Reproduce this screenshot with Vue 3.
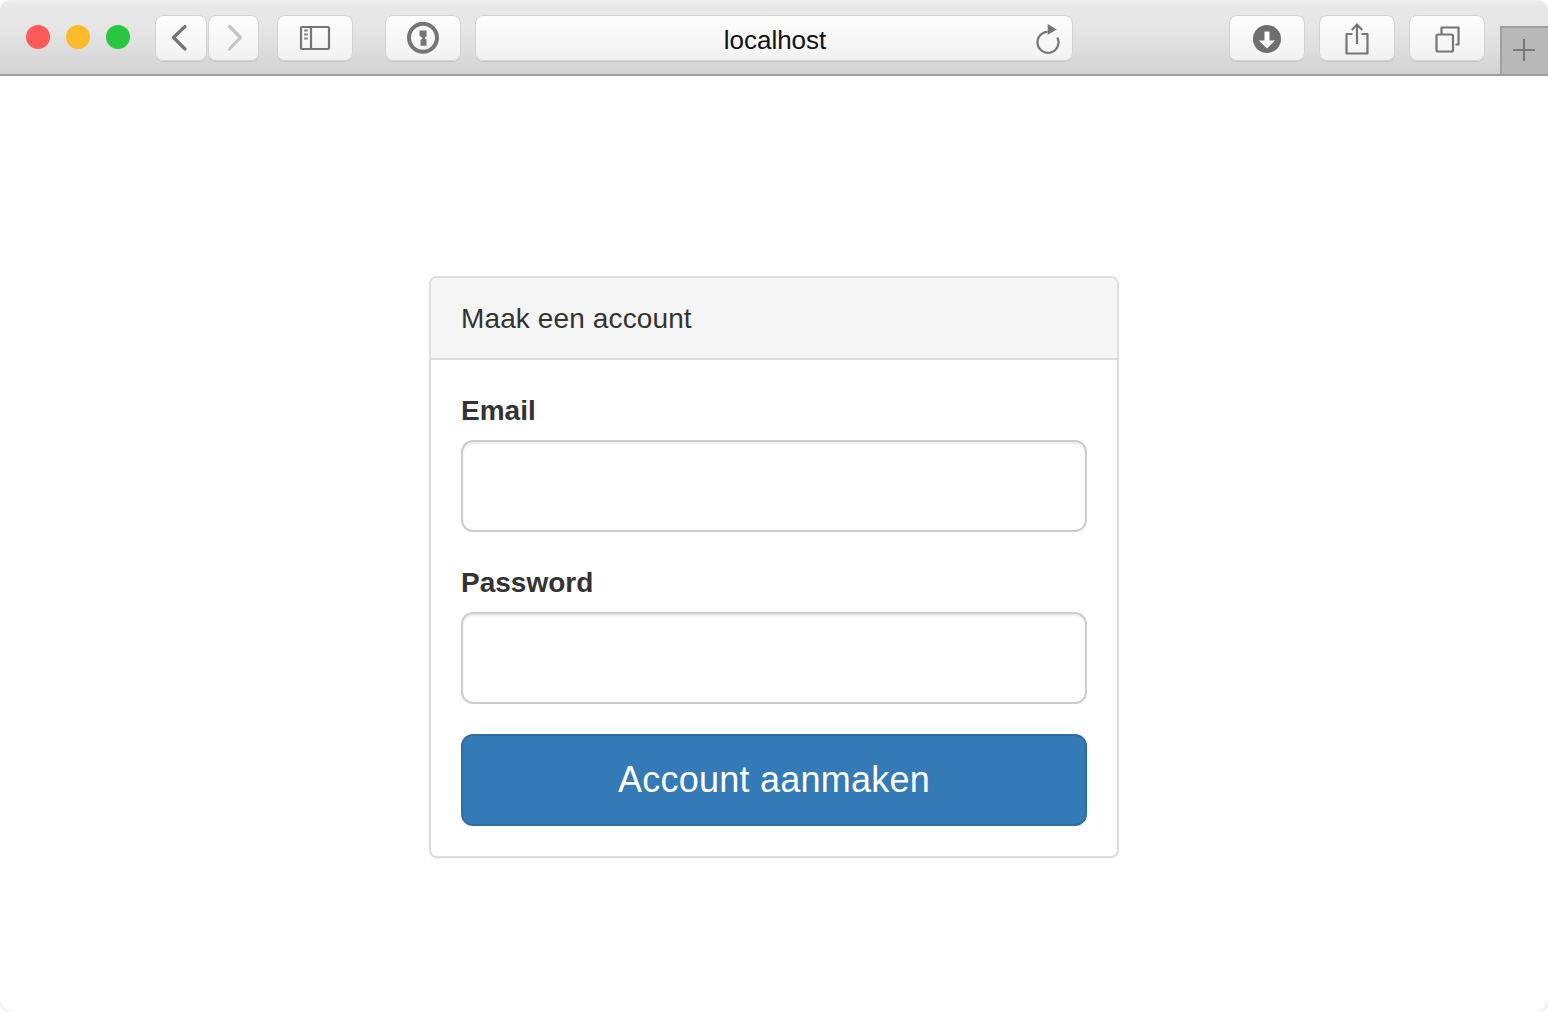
<script setup>
const fields = [
  { id: 'email', label: 'Email', type: 'email' },
  { id: 'password', label: 'Password', type: 'password' }
]
</script>

<template>
  <div class="window">
    <header class="toolbar">
      <div class="lights">
        <span class="light red"></span>
        <span class="light yellow"></span>
        <span class="light green"></span>
      </div>

      <div class="nav">
        <div class="btn back">
          <svg width="52" height="46" viewBox="0 0 52 46"><path d="M30 11.5 18.5 22.5 30 34" fill="none" stroke="#757575" stroke-width="3.2" stroke-linecap="round" stroke-linejoin="round"/></svg>
        </div>
        <div class="btn forward">
          <svg width="51" height="46" viewBox="0 0 51 46"><path d="M21.5 11.5 32.5 22.5 21.500 34" fill="none" stroke="#c4c4c4" stroke-width="3.2" stroke-linecap="round" stroke-linejoin="round"/></svg>
        </div>
      </div>

      <div class="btn wide sidebar">
        <svg width="76" height="46" viewBox="0 0 76 46">
          <rect x="24" y="12" width="28" height="22" rx="1" fill="none" stroke="#757575" stroke-width="2.200"/>
          <path d="M34 12v22" stroke="#757575" stroke-width="2.200"/>
          <path d="M27 15.500h4M27 19.500h4M27 23.500h4" stroke="#8a8a8a" stroke-width="2"/>
        </svg>
      </div>

      <div class="btn wide onepass">
        <svg width="76" height="46" viewBox="0 0 76 46">
          <circle cx="38" cy="22.700" r="14" fill="none" stroke="#757575" stroke-width="4"/>
          <path d="M34.500 15.500h7v5.700l-2 1.800 2 1.800v6h-6v-5.500l2.300-2.300-3.300-2.200z" fill="#757575"/>
        </svg>
      </div>

      <div class="url">
        <span></span>
        <span class="url-text">localhost</span>
        <svg class="reload" width="40" height="46" viewBox="0 0 40 46">
          <path d="M14.500 15.800A10.500 10.500 0 1 0 24.400 21.600" fill="none" stroke="#757575" stroke-width="2.200"/>
          <path d="M14.700 8 23.700 13.500 14.700 18.700z" fill="#757575"/>
        </svg>
      </div>

      <div class="btn wide download">
        <svg width="76" height="46" viewBox="0 0 76 46">
          <circle cx="38" cy="24" r="14" fill="#6f6f6f"/>
          <path d="M35.500 16.500h5v9h5.500L38 33.500l-8-8h5.500z" fill="#fff"/>
        </svg>
      </div>

      <div class="btn wide share">
        <svg width="76" height="46" viewBox="0 0 76 46">
          <path d="M33.500 19h-6v19.500h21V19h-6" fill="none" stroke="#757575" stroke-width="2.200" stroke-linejoin="round"/>
          <path d="M38 10v19M32.800 15 38 9.500l5.200 5.500" fill="none" stroke="#757575" stroke-width="2.200"/>
        </svg>
      </div>

      <div class="btn wide tabs">
        <svg width="76" height="46" viewBox="0 0 76 46">
          <rect x="27.500" y="19.500" width="16.500" height="17" rx="1.500" fill="none" stroke="#757575" stroke-width="2.200"/>
          <path d="M32.500 19v-6.500h17v17h-3" fill="none" stroke="#757575" stroke-width="2.200" stroke-linejoin="round"/>
        </svg>
      </div>

      <div class="new-tab">
        <svg width="46" height="48" viewBox="0 0 46 48">
          <path d="M11 22h22M22 11v22" stroke="#777" stroke-width="2"/>
        </svg>
      </div>
    </header>

    <main class="page">
      <section class="card">
        <h2 class="card-head">Maak een account</h2>
        <form class="card-body" @submit.prevent>
          <div v-for="field in fields" :key="field.id" class="group">
            <label class="label" :for="field.id">{{ field.label }}</label>
            <input :id="field.id" class="input" :type="field.type" />
          </div>
          <button class="submit" type="submit">Account aanmaken</button>
        </form>
      </section>
    </main>

    <span class="corner left"></span>
    <span class="corner right"></span>
  </div>
</template>

<style>
html, body {
  margin: 0;
  background: #fff;
}
</style>

<style scoped>
.window {
  position: relative;
  height: 1012px;
  overflow: hidden;
  border-radius: 10px;
  background: #fff;
  font-family: "Liberation Sans", Arial, sans-serif;
  color: #333;
}

.toolbar {
  box-sizing: border-box;
  height: 76px;
  display: flex;
  align-items: flex-start;
  padding-top: 15px;
  border-bottom: 2px solid #a0a0a0;
  background: linear-gradient(#f0eff0 0, #e9e8e9 6px, #e5e5e5 30px, #d3d3d3 100%);
}

.lights {
  display: flex;
  gap: 16px;
  margin: 10px 25px 0 26px;
}

.light {
  width: 24px;
  height: 24px;
  border-radius: 50%;
}
.red { background: #fc5b57; }
.yellow { background: #fdbb2c; }
.green { background: #27c840; }

.nav {
  display: flex;
  gap: 1px;
  margin-right: 18px;
}

.btn {
  height: 46px;
  border-radius: 8px;
  background: linear-gradient(#fefefe, #f1f1f1);
  box-shadow: inset 0 0 0 1px #d2d2d2, 0 1px 0 #c4c4c4;
  flex: none;
}
.btn svg,
.new-tab svg {
  display: block;
}

.back { width: 52px; }
.forward { width: 51px; }
.wide { width: 76px; }

.sidebar { margin-right: 32px; }
.onepass { margin-right: 14px; }
.download { margin-right: 14px; }
.share { margin-right: 14px; }
.tabs { margin-right: 15px; }

.url {
  box-sizing: border-box;
  width: 598px;
  height: 46px;
  margin-right: 156px;
  display: grid;
  grid-template-columns: 1fr auto 1fr;
  align-items: center;
  border-radius: 8px;
  background: linear-gradient(#fefefe, #f1f1f1);
  box-shadow: inset 0 0 0 1px #d2d2d2, 0 1px 0 #c4c4c4;
}

.url-text {
  font-size: 26px;
  line-height: 46px;
  color: #111;
  padding-top: 2px;
  padding-left: 2px;
}

.reload {
  justify-self: end;
  display: block;
}

.new-tab {
  box-sizing: border-box;
  width: 48px;
  height: 48px;
  margin-top: 11px;
  border-top: 2px solid #a0a0a0;
  border-left: 2px solid #a0a0a0;
  background: #b8b8b8;
  flex: none;
}

.page {
  padding-top: 200px;
  display: flex;
  justify-content: center;
}

.card {
  box-sizing: border-box;
  width: 690px;
  border: 2px solid #ddd;
  border-radius: 8px;
  background: #fff;
  box-shadow: 0 1px 2px rgba(0, 0, 0, 0.05);
  overflow: hidden;
}

.card-head {
  box-sizing: border-box;
  height: 82px;
  margin: 0;
  padding: 21px 30px 19px;
  border-bottom: 2px solid #ddd;
  background: #f5f5f5;
  font-size: 28px;
  font-weight: 400;
  line-height: 40px;
  letter-spacing: 0.12px;
  color: #333;
}

.card-body {
  padding: 30px;
}

.group {
  margin-bottom: 30px;
}

.label {
  display: block;
  padding-top: 1px;
  margin-bottom: 9px;
  font-size: 28px;
  font-weight: 700;
  line-height: 40px;
  color: #333;
}

.input {
  display: block;
  box-sizing: border-box;
  width: 100%;
  height: 92px;
  border: 2px solid #ccc;
  border-radius: 12px;
  background: #fff;
  box-shadow: inset 0 2px 2px rgba(0, 0, 0, 0.075);
  outline: none;
}

.submit {
  display: block;
  box-sizing: border-box;
  width: 100%;
  height: 92px;
  padding: 0;
  border: 2px solid #2e6da4;
  border-radius: 12px;
  background: #337ab7;
  color: #fff;
  font-family: inherit;
  font-size: 36px;
  line-height: 48px;
  letter-spacing: 0.25px;
}

.corner {
  position: absolute;
  bottom: 0;
  width: 10px;
  height: 10px;
  box-sizing: border-box;
  border-bottom: 1px solid #ddd;
}
.corner.left {
  left: 0;
  border-left: 1px solid #ddd;
  border-bottom-left-radius: 10px;
}
.corner.right {
  right: 0;
  border-right: 1px solid #ddd;
  border-bottom-right-radius: 10px;
}
</style>
